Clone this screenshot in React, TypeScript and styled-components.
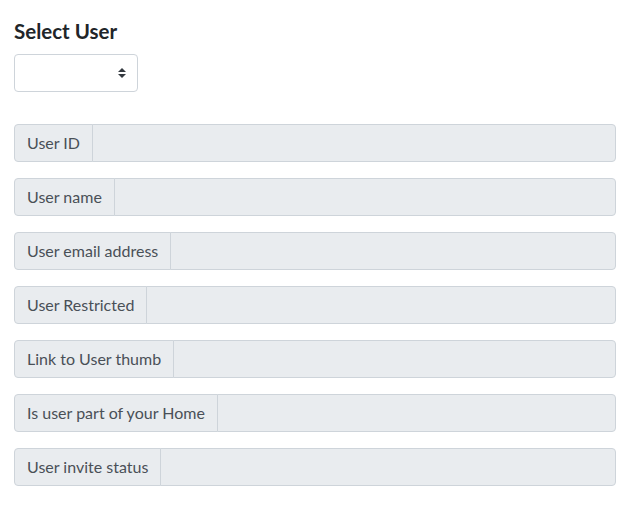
import React from "react";
import styled, { createGlobalStyle } from "styled-components";

const fields = [
  "User ID",
  "User name",
  "User email address",
  "User Restricted",
  "Link to User thumb",
  "Is user part of your Home",
  "User invite status",
];

const GlobalStyle = createGlobalStyle`
  body {
    margin: 0;
    background: #fff;
    color: #212529;
    font-family: Lato, "Liberation Sans", sans-serif;
  }
`;

const App = () => {
  return (
    <Page>
      <GlobalStyle />
      <Title>Select User</Title>
      <SelectBox>
        <Arrows viewBox="0 0 4 5" aria-hidden>
          <path d="M2 0L0 2h4zm0 5L0 3h4z" fill="#343a40" />
        </Arrows>
      </SelectBox>
      <Groups>
        {fields.map((label) => (
          <Group key={label}>
            <Prepend>{label}</Prepend>
            <Field readOnly />
          </Group>
        ))}
      </Groups>
    </Page>
  );
};
export default App;

const Page = styled.main`
  padding: 19px 20px 0 14px;
`;
const Title = styled.h5`
  margin: 0 0 11px;
  font-size: 20.5px;
  line-height: 24px;
  font-weight: 700;
`;
const SelectBox = styled.div`
  position: relative;
  width: 124px;
  height: 38px;
  box-sizing: border-box;
  border: 1px solid #ced4da;
  border-radius: 4px;
  background: #fff;
`;
const Arrows = styled.svg`
  position: absolute;
  right: 11px;
  top: 13px;
  width: 8px;
  height: 10px;
`;
const Groups = styled.div`
  margin-top: 32px;
  display: flex;
  flex-direction: column;
  gap: 16px;
`;
const Group = styled.div`
  display: flex;
  height: 38px;
`;
const Prepend = styled.span`
  display: flex;
  align-items: center;
  padding: 0 12px 1px;
  box-sizing: border-box;
  background: #e9ecef;
  border: 1px solid #ced4da;
  border-radius: 4px 0 0 4px;
  color: #495057;
  font-size: 16px;
  white-space: nowrap;
`;
const Field = styled.input`
  flex: 1;
  min-width: 0;
  margin: 0 0 0 -1px;
  box-sizing: border-box;
  background: #e9ecef;
  border: 1px solid #ced4da;
  border-radius: 0 4px 4px 0;
  outline: none;
`;
